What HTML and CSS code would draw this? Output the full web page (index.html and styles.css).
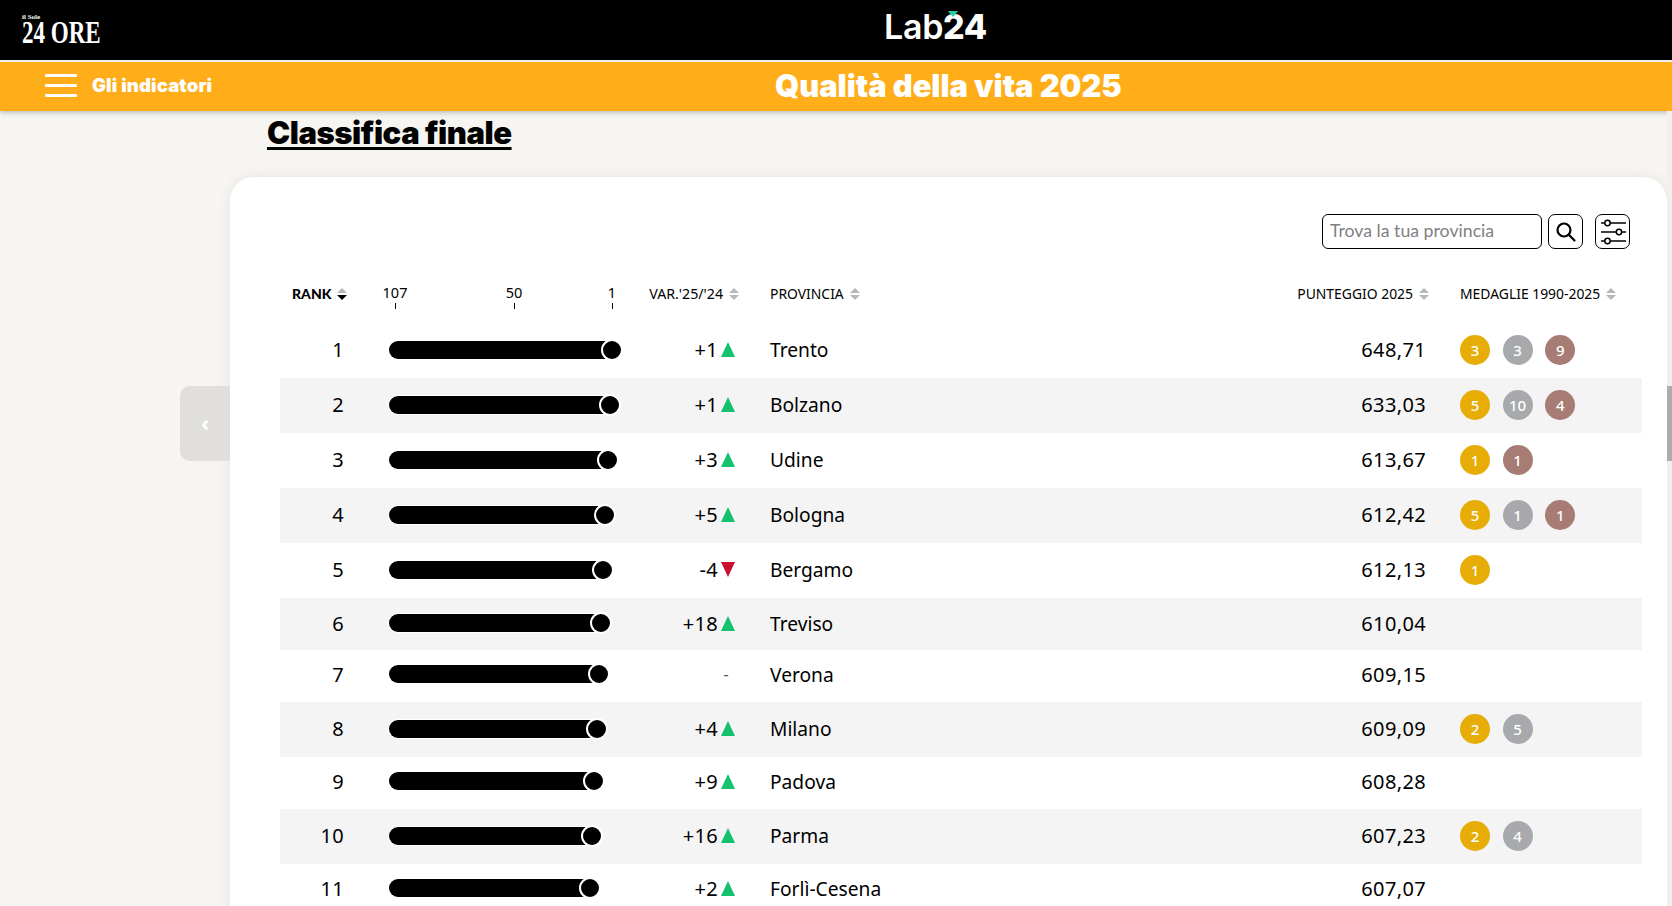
FILE: index.html
```html
<!DOCTYPE html>
<html lang="it">
<head>
<meta charset="utf-8">
<title>Qualità della vita 2025</title>
<link rel="stylesheet" href="styles.css">
</head>
<body>
<header class="topbar">
  <div class="brand">
    <span class="brand-sole">il Sole</span>
    <span class="brand-ore">24 ORE</span>
  </div>
  <div class="lab">Lab<span class="lab-num">24</span><span class="lab-tri"></span></div>
</header>
<nav class="orangebar">
  <div class="menu">
    <span class="burger"><i></i><i></i><i></i></span>
    <span class="menu-label">Gli indicatori</span>
  </div>
  <div class="page-title">Qualità della vita 2025</div>
</nav>
<main class="main">
  <h1 class="heading">Classifica finale</h1>
  <section class="card">
    <button class="prev">‹</button>
    <div class="toolbar">
      <div class="search">Trova la tua provincia</div>
      <button class="iconbtn search-btn">
        <svg width="24" height="24" viewBox="0 0 24 24" fill="none" stroke="#000" stroke-width="2.2"><circle cx="10" cy="10" r="6.5"/><path d="M14.8 14.8 L20.5 20.5" stroke-linecap="round"/></svg>
      </button>
      <button class="iconbtn">
        <svg width="28" height="26" viewBox="0 0 28 26" fill="none" stroke="#000" stroke-width="1.5"><path d="M2 4H27M2 13H27M2 22H27" /><circle cx="8.5" cy="4" r="2.7" fill="#fff"/><circle cx="20" cy="13" r="2.7" fill="#fff"/><circle cx="8.5" cy="22" r="2.7" fill="#fff"/></svg>
      </button>
    </div>
    <div class="row head">
      <div class="h-rank"><b>RANK</b><span class="sort active"></span></div>
      <div class="axis">
        <span class="tick t107">107</span>
        <span class="tick t50">50</span>
        <span class="tick t1">1</span>
      </div>
      <div class="h-var">VAR.'25/'24<span class="sort"></span></div>
      <div class="h-prov">PROVINCIA<span class="sort"></span></div>
      <div class="h-score">PUNTEGGIO 2025<span class="sort"></span></div>
      <div class="h-med">MEDAGLIE 1990-2025<span class="sort"></span></div>
    </div>

    <div class="row tall">
      <div class="rank">1</div>
      <div class="barcell"><div class="bar" style="width:232px"></div></div>
      <div class="var">+1<span class="up"></span></div>
      <div class="prov">Trento</div>
      <div class="score">648,71</div>
      <div class="medals"><span class="m gold">3</span><span class="m silver">3</span><span class="m bronze">9</span></div>
    </div>
    <div class="row tall alt">
      <div class="rank">2</div>
      <div class="barcell"><div class="bar" style="width:230px"></div></div>
      <div class="var">+1<span class="up"></span></div>
      <div class="prov">Bolzano</div>
      <div class="score">633,03</div>
      <div class="medals"><span class="m gold">5</span><span class="m silver">10</span><span class="m bronze">4</span></div>
    </div>
    <div class="row tall">
      <div class="rank">3</div>
      <div class="barcell"><div class="bar" style="width:227.6px"></div></div>
      <div class="var">+3<span class="up"></span></div>
      <div class="prov">Udine</div>
      <div class="score">613,67</div>
      <div class="medals"><span class="m gold">1</span><span class="m bronze">1</span></div>
    </div>
    <div class="row tall alt">
      <div class="rank">4</div>
      <div class="barcell"><div class="bar" style="width:225.4px"></div></div>
      <div class="var">+5<span class="up"></span></div>
      <div class="prov">Bologna</div>
      <div class="score">612,42</div>
      <div class="medals"><span class="m gold">5</span><span class="m silver">1</span><span class="m bronze">1</span></div>
    </div>
    <div class="row tall">
      <div class="rank">5</div>
      <div class="barcell"><div class="bar" style="width:223.2px"></div></div>
      <div class="var">-4<span class="down"></span></div>
      <div class="prov">Bergamo</div>
      <div class="score">612,13</div>
      <div class="medals"><span class="m gold">1</span></div>
    </div>
    <div class="row alt">
      <div class="rank">6</div>
      <div class="barcell"><div class="bar" style="width:221px"></div></div>
      <div class="var">+18<span class="up"></span></div>
      <div class="prov">Treviso</div>
      <div class="score">610,04</div>
      <div class="medals"></div>
    </div>
    <div class="row plain">
      <div class="rank">7</div>
      <div class="barcell"><div class="bar" style="width:218.8px"></div></div>
      <div class="var"><span class="same">-</span></div>
      <div class="prov">Verona</div>
      <div class="score">609,15</div>
      <div class="medals"></div>
    </div>
    <div class="row tall alt">
      <div class="rank">8</div>
      <div class="barcell"><div class="bar" style="width:216.6px"></div></div>
      <div class="var">+4<span class="up"></span></div>
      <div class="prov">Milano</div>
      <div class="score">609,09</div>
      <div class="medals"><span class="m gold">2</span><span class="m silver">5</span></div>
    </div>
    <div class="row plain">
      <div class="rank">9</div>
      <div class="barcell"><div class="bar" style="width:214.4px"></div></div>
      <div class="var">+9<span class="up"></span></div>
      <div class="prov">Padova</div>
      <div class="score">608,28</div>
      <div class="medals"></div>
    </div>
    <div class="row tall alt">
      <div class="rank">10</div>
      <div class="barcell"><div class="bar" style="width:212.2px"></div></div>
      <div class="var">+16<span class="up"></span></div>
      <div class="prov">Parma</div>
      <div class="score">607,23</div>
      <div class="medals"><span class="m gold">2</span><span class="m silver">4</span></div>
    </div>
    <div class="row plain">
      <div class="rank">11</div>
      <div class="barcell"><div class="bar" style="width:210px"></div></div>
      <div class="var">+2<span class="up"></span></div>
      <div class="prov">Forlì-Cesena</div>
      <div class="score">607,07</div>
      <div class="medals"></div>
    </div>
  </section>
</main>
<div class="scrolltrack"><div class="scrollthumb"></div></div>
</body>
</html>
```

FILE: styles.css
```css
* { box-sizing: border-box; }
html, body { margin: 0; padding: 0; height: 906px; overflow: hidden; }
body { background: #f6f5f1; color: #000; font-family: "Noto Sans", sans-serif; position: relative; }

.topbar { height: 60px; background: #000; display: flex; align-items: center; color: #fff; }
.brand { width: 884px; padding-left: 22px; margin-top: -4px; display: flex; flex-direction: column; font-family: "Liberation Serif", serif; font-weight: 700; line-height: 1; }
.brand-sole { font-size: 7px; height: 6px; margin-top: 2px; margin-bottom: -2px; }
.brand-ore { display: block; width: 110px; height: 26px; font-size: 32px; line-height: 28px; white-space: nowrap; transform: scaleX(0.72); transform-origin: left top; }
.lab { position: relative; font-family: "Inter", sans-serif; font-weight: 600; font-size: 34px; letter-spacing: -0.3px; line-height: 1; margin-top: -6px; }
.lab-num { font-weight: 800; letter-spacing: -0.5px; }
.lab-tri { position: absolute; left: 64px; top: 1px; border-left: 5px solid transparent; border-right: 5px solid transparent; border-top: 6px solid #1fd3a0; }

.orangebar { margin-top: 2px; height: 49px; background: #ffae1a; color: #fff; display: flex; align-items: center; box-shadow: 0 2px 5px rgba(0,0,0,.22); position: relative; }
.menu { width: 775px; padding-left: 45px; display: flex; align-items: center; gap: 15px; }
.burger { display: flex; flex-direction: column; gap: 7px; width: 32px; margin-top: -2px; }
.burger i { display: block; height: 3px; background: #fff; border-radius: 1px; }
.menu-label { font-family: "Inter", sans-serif; font-weight: 900; font-size: 18.5px; letter-spacing: 0.15px; margin-top: -4px; white-space: nowrap; }
.page-title { font-family: "Inter", sans-serif; font-weight: 900; font-size: 30.8px; line-height: 1; margin-top: -1px; white-space: nowrap; }

.main { display: flex; flex-direction: column; }
.heading { margin: 0; padding: 4px 0 0 267px; height: 66px; font-family: "Inter", sans-serif; font-weight: 900; font-size: 31px; letter-spacing: -0.45px; line-height: 36px; color: #000; text-decoration: underline; text-decoration-thickness: 3px; text-underline-offset: 3px; text-decoration-skip-ink: none; white-space: nowrap; }
.card { position: relative; margin-left: 230px; width: 1437px; background: #fff; border-radius: 24px 24px 0 0; box-shadow: 0 0 14px rgba(0,0,0,.07); padding: 37px 25px 0 50px; }
.prev { position: absolute; left: -50px; top: 209px; width: 50px; height: 75px; border: 0; background: #e0dfdc; border-radius: 10px 0 0 10px; color: #fff; font-size: 22px; font-weight: 700; font-family: "Noto Sans", sans-serif; padding: 0 0 4px; }

.toolbar { display: flex; height: 35px; padding-left: 1042px; }
.search { width: 220px; height: 35px; border: 1px solid #000; border-radius: 6px; padding-left: 7px; font-family: "Lato", sans-serif; font-size: 17.7px; line-height: 32px; color: #808080; white-space: nowrap; }
.iconbtn { width: 35px; height: 35px; border: 1px solid #000; border-radius: 7px; background: #fff; padding: 0; display: flex; align-items: center; justify-content: center; margin-left: 12px; }
.search-btn { margin-left: 6px; }

.row { display: grid; grid-template-columns: 64px 281px 111px 534px 156px 216px; width: 1362px; height: 52px; padding-bottom: 2px; align-items: center; font-size: 20px; letter-spacing: 0.35px; }
.tall { height: 55px; }
.plain { padding-bottom: 4px; }
.alt { background: #f4f4f4; }
.head { height: 74px; padding: 15px 0 0; font-size: 13.9px; letter-spacing: 0; }

.head > div { display: flex; align-items: center; white-space: nowrap; }
.sort { display: flex; flex-direction: column; gap: 2px; margin-left: 6px; flex: none; }
.sort::before, .sort::after { content: ""; display: block; border-left: 5px solid transparent; border-right: 5px solid transparent; }
.sort::before { border-bottom: 5px solid #b8b8b8; }
.sort::after { border-top: 5px solid #b8b8b8; }
.sort.active::after { border-top-color: #000; }

.h-rank { padding-left: 12px; font-family: "Lato", sans-serif; font-size: 14px; }
.h-rank b { font-weight: 900; }
.head .axis { align-items: flex-start; padding-left: 31px; font-size: 14.5px; }
.tick { flex: none; width: 40px; text-align: center; display: flex; flex-direction: column; align-items: center; line-height: 18px; margin-top: 5px; }
.tick::after { content: ""; width: 1px; height: 6px; background: #000; margin-top: 2px; }
.t50 { margin-left: 79px; }
.t1 { margin-left: 58px; }
.head .h-var { justify-content: flex-end; margin-right: -3px; font-size: 14.2px; }
.h-prov { padding-left: 34px; }
.head .h-score { justify-content: flex-end; margin-right: -3px; }
.h-med { padding-left: 34px; }

.rank { text-align: right; }
.barcell { padding-left: 45px; }
.bar { position: relative; height: 18px; background: #000; border-radius: 9px; box-shadow: 0 0 0 1px #fff; }
.bar::after { content: ""; position: absolute; right: -2px; top: -2px; width: 18px; height: 18px; border-radius: 50%; background: #000; border: 2px solid #fff; }
.var { display: flex; align-items: center; justify-content: flex-end; gap: 3px; padding-right: 1px; }
.up, .down { display: block; border-left: 7.5px solid transparent; border-right: 7.5px solid transparent; }
.up { border-bottom: 15px solid #14c16f; }
.down { border-top: 15px solid #c8102e; }
.same { font-size: 16px; color: #555; margin-right: 6px; }
.prov { padding-left: 34px; font-size: 19.2px; letter-spacing: 0; }
.score { text-align: right; }
.medals { padding-left: 34px; display: flex; gap: 12.6px; }
.m { width: 30px; height: 30px; border-radius: 50%; color: #fff; font-size: 15px; font-weight: 500; display: flex; align-items: center; justify-content: center; letter-spacing: 0; }
.gold { background: #e7ad06; }
.silver { background: #a8a9ac; }
.bronze { background: #a67c74; }

.scrolltrack { position: absolute; right: 0; top: 111px; bottom: 0; width: 5px; background: #f1f0ee; }
.scrollthumb { margin-top: 275px; height: 75px; background: #adadad; }
```
